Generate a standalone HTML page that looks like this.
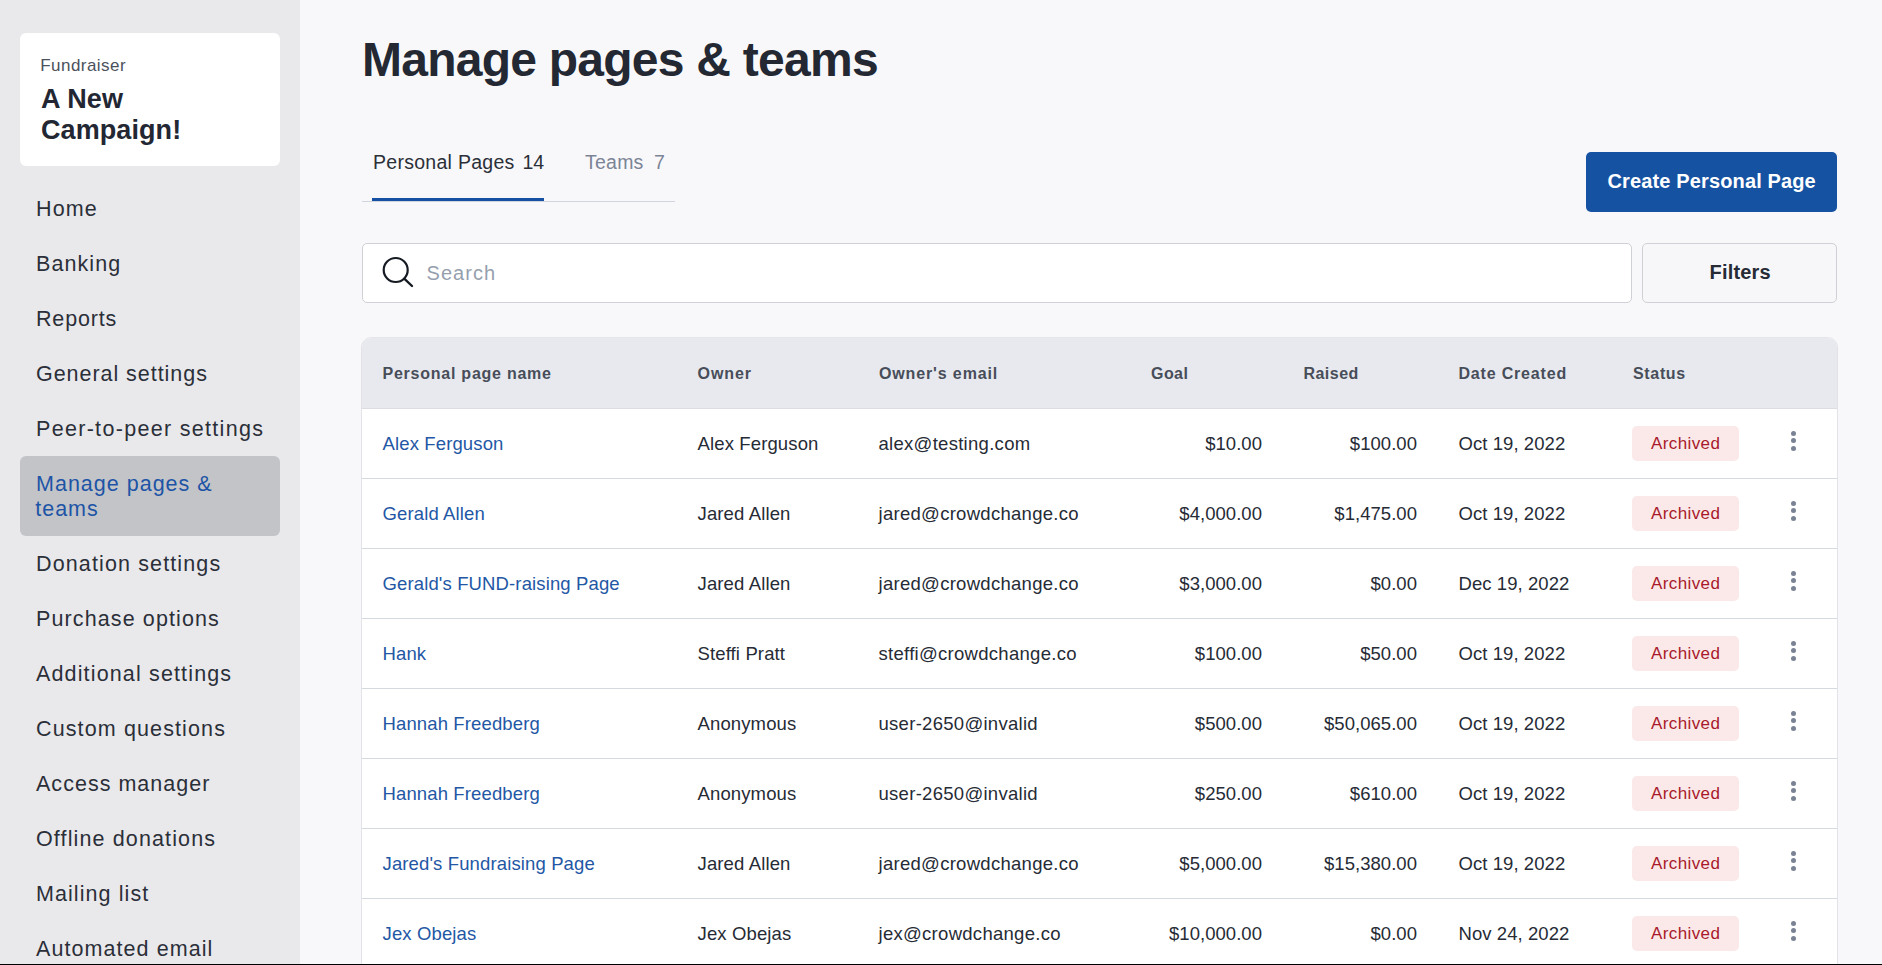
<!DOCTYPE html>
<html><head><meta charset="utf-8"><title>Manage pages &amp; teams</title>
<style>
html,body{margin:0;padding:0}
body{width:1882px;height:965px;overflow:hidden;position:relative;background:#f8f8fa;font-family:"Liberation Sans", sans-serif}
.t{position:absolute;white-space:nowrap}
</style></head><body>
<div style="position:absolute;left:0;top:0;width:300px;height:965px;background:#e9e9ec"></div>
<div style="position:absolute;left:20px;top:33px;width:260px;height:133px;background:#fff;border-radius:6px"></div>
<div id="fund" class="t" style="left:40.2px;top:54.61px;font-size:17px;line-height:21px;color:#4b515c;font-weight:400;letter-spacing:0.465px">Fundraiser</div>
<div id="anew" class="t" style="left:41px;top:81.64px;font-size:27px;line-height:34px;color:#222733;font-weight:700;letter-spacing:0.1px">A New</div>
<div id="camp" class="t" style="left:41px;top:112.64px;font-size:27px;line-height:34px;color:#222733;font-weight:700;letter-spacing:0.083px">Campaign!</div>
<div id="nav0" class="t" style="left:36px;top:195.85px;font-size:21.5px;line-height:27px;color:#2b2f38;font-weight:400;letter-spacing:1.1px">Home</div>
<div id="nav1" class="t" style="left:36px;top:250.85px;font-size:21.5px;line-height:27px;color:#2b2f38;font-weight:400;letter-spacing:1.07px">Banking</div>
<div id="nav2" class="t" style="left:36px;top:305.85px;font-size:21.5px;line-height:27px;color:#2b2f38;font-weight:400;letter-spacing:0.836px">Reports</div>
<div id="nav3" class="t" style="left:36px;top:360.85px;font-size:21.5px;line-height:27px;color:#2b2f38;font-weight:400;letter-spacing:0.956px">General settings</div>
<div id="nav4" class="t" style="left:36px;top:415.85px;font-size:21.5px;line-height:27px;color:#2b2f38;font-weight:400;letter-spacing:1.31px">Peer-to-peer settings</div>
<div style="position:absolute;left:20px;top:456px;width:260px;height:80px;background:#c3c4c8;border-radius:6px"></div>
<div id="nav5" class="t" style="left:36px;top:470.85px;font-size:21.5px;line-height:27px;color:#1d54a6;font-weight:400;letter-spacing:1.006px">Manage pages &amp;</div>
<div id="nav5b" class="t" style="left:35.2px;top:495.75px;font-size:21.5px;line-height:27px;color:#1d54a6;font-weight:400;letter-spacing:1.006px">teams</div>
<div id="nav6" class="t" style="left:36px;top:550.85px;font-size:21.5px;line-height:27px;color:#2b2f38;font-weight:400;letter-spacing:1.128px">Donation settings</div>
<div id="nav7" class="t" style="left:36px;top:605.85px;font-size:21.5px;line-height:27px;color:#2b2f38;font-weight:400;letter-spacing:1.115px">Purchase options</div>
<div id="nav8" class="t" style="left:36px;top:660.85px;font-size:21.5px;line-height:27px;color:#2b2f38;font-weight:400;letter-spacing:1.144px">Additional settings</div>
<div id="nav9" class="t" style="left:36px;top:715.85px;font-size:21.5px;line-height:27px;color:#2b2f38;font-weight:400;letter-spacing:1.122px">Custom questions</div>
<div id="nav10" class="t" style="left:36px;top:770.85px;font-size:21.5px;line-height:27px;color:#2b2f38;font-weight:400;letter-spacing:1.023px">Access manager</div>
<div id="nav11" class="t" style="left:36px;top:825.85px;font-size:21.5px;line-height:27px;color:#2b2f38;font-weight:400;letter-spacing:1.128px">Offline donations</div>
<div id="nav12" class="t" style="left:36px;top:880.85px;font-size:21.5px;line-height:27px;color:#2b2f38;font-weight:400;letter-spacing:1.077px">Mailing list</div>
<div id="nav13" class="t" style="left:36px;top:935.85px;font-size:21.5px;line-height:27px;color:#2b2f38;font-weight:400;letter-spacing:1.07px">Automated email</div>
<div id="title" class="t" style="left:362px;top:29.57px;font-size:48px;line-height:60px;color:#232833;font-weight:700;letter-spacing:-0.752px">Manage pages &amp; teams</div>
<div id="tab1" class="t" style="left:373px;top:150.44px;font-size:19.5px;line-height:24px;color:#2b2f38;font-weight:400;letter-spacing:0.281px">Personal Pages</div>
<div id="tab1n" class="t" style="left:522.5px;top:150.44px;font-size:19.5px;line-height:24px;color:#2b2f38;font-weight:400;letter-spacing:0px">14</div>
<div id="tab2" class="t" style="left:585px;top:150.44px;font-size:19.5px;line-height:24px;color:#7b8496;font-weight:400;letter-spacing:0.229px">Teams</div>
<div id="tab2n" class="t" style="left:654px;top:150.44px;font-size:19.5px;line-height:24px;color:#7b8496;font-weight:400;letter-spacing:0px">7</div>
<div style="position:absolute;left:362px;top:201px;width:313px;height:1px;background:#d1d6de"></div>
<div style="position:absolute;left:372px;top:198px;width:172px;height:3px;background:#1650a3"></div>
<div style="position:absolute;left:1586px;top:152px;width:251px;height:60px;background:#1652a2;border-radius:5px"></div>
<div id="btn" class="t" style="left:1607.5px;top:168.77px;font-size:20px;line-height:25px;color:#ffffff;font-weight:700;letter-spacing:0.136px">Create Personal Page</div>
<div style="position:absolute;left:362px;top:243px;width:1268px;height:58px;background:#fff;border:1px solid #cfd1d6;border-radius:5px"></div>
<svg style="position:absolute;left:380px;top:254px" width="36" height="36" viewBox="0 0 36 36"><circle cx="15.7" cy="16" r="12" fill="none" stroke="#161a22" stroke-width="2.2"/><line x1="24.5" y1="24.8" x2="32" y2="32" stroke="#161a22" stroke-width="2.4" stroke-linecap="round"/></svg>
<div id="search" class="t" style="left:426.5px;top:260.57px;font-size:20px;line-height:25px;color:#969fae;font-weight:400;letter-spacing:1.06px">Search</div>
<div style="position:absolute;left:1642px;top:243px;width:193px;height:58px;background:#f7f7f9;border:1px solid #cfd1d6;border-radius:5px"></div>
<div id="filters" class="t" style="left:1709.5px;top:259.57px;font-size:20px;line-height:25px;color:#262b35;font-weight:700;letter-spacing:0.197px">Filters</div>
<div style="position:absolute;left:361px;top:337px;width:1475px;height:640px;background:#fff;border:1px solid #e2e3e8;border-top-color:#e5e6eb;border-radius:11px 11px 0 0;overflow:hidden"><div style="position:absolute;left:0;top:0;right:0;height:70px;background:#e8e9ee;border-bottom:1px solid #dcdde1"></div></div>
<div id="h0" class="t" style="left:382.5px;top:364.06px;font-size:16px;line-height:20px;color:#474d59;font-weight:700;letter-spacing:0.758px">Personal page name</div>
<div id="h1" class="t" style="left:697.5px;top:364.06px;font-size:16px;line-height:20px;color:#474d59;font-weight:700;letter-spacing:0.95px">Owner</div>
<div id="h2" class="t" style="left:879px;top:364.06px;font-size:16px;line-height:20px;color:#474d59;font-weight:700;letter-spacing:0.867px">Owner's email</div>
<div id="h3" class="t" style="left:1151px;top:364.06px;font-size:16px;line-height:20px;color:#474d59;font-weight:700;letter-spacing:0.436px">Goal</div>
<div id="h4" class="t" style="left:1303.5px;top:364.06px;font-size:16px;line-height:20px;color:#474d59;font-weight:700;letter-spacing:0.46px">Raised</div>
<div id="h5" class="t" style="left:1458.5px;top:364.06px;font-size:16px;line-height:20px;color:#474d59;font-weight:700;letter-spacing:0.814px">Date Created</div>
<div id="h6" class="t" style="left:1633px;top:364.06px;font-size:16px;line-height:20px;color:#474d59;font-weight:700;letter-spacing:0.66px">Status</div>
<div id="r0c0" class="t" style="left:382.5px;top:432.09px;font-size:18.5px;line-height:23px;color:#2357a5;font-weight:400;letter-spacing:0.132px">Alex Ferguson</div>
<div id="r0c1" class="t" style="left:697.5px;top:432.09px;font-size:18.5px;line-height:23px;color:#262b35;font-weight:400;letter-spacing:0.132px">Alex Ferguson</div>
<div id="r0c2" class="t" style="left:878.5px;top:432.09px;font-size:18.5px;line-height:23px;color:#262b35;font-weight:400;letter-spacing:0.287px">alex@testing.com</div>
<div id="r0c3" class="t" style="right:620px;text-align:right;top:432.09px;font-size:18.5px;line-height:23px;color:#262b35;font-weight:400;letter-spacing:0.043px">$10.00</div>
<div id="r0c4" class="t" style="right:465px;text-align:right;top:432.09px;font-size:18.5px;line-height:23px;color:#262b35;font-weight:400;letter-spacing:0.043px">$100.00</div>
<div id="r0c5" class="t" style="left:1458.5px;top:432.09px;font-size:18.5px;line-height:23px;color:#262b35;font-weight:400;letter-spacing:0.071px">Oct 19, 2022</div>
<div style="position:absolute;left:1632px;top:426px;width:107px;height:35px;background:#fbe9e9;border-radius:5px"></div>
<div id="r0b" class="t" style="left:1651px;top:432.81px;font-size:17px;line-height:21px;color:#a8192b;font-weight:400;letter-spacing:0.389px">Archived</div>
<div style="position:absolute;left:1791px;top:430.8px;width:5.2px;height:5.2px;border-radius:50%;background:#7a8295"></div>
<div style="position:absolute;left:1791px;top:438.3px;width:5.2px;height:5.2px;border-radius:50%;background:#7a8295"></div>
<div style="position:absolute;left:1791px;top:445.8px;width:5.2px;height:5.2px;border-radius:50%;background:#7a8295"></div>
<div style="position:absolute;left:362px;top:478px;width:1475px;height:1px;background:#d5d9e0"></div>
<div id="r1c0" class="t" style="left:382.5px;top:502.09px;font-size:18.5px;line-height:23px;color:#2357a5;font-weight:400;letter-spacing:0.132px">Gerald Allen</div>
<div id="r1c1" class="t" style="left:697.5px;top:502.09px;font-size:18.5px;line-height:23px;color:#262b35;font-weight:400;letter-spacing:0.132px">Jared Allen</div>
<div id="r1c2" class="t" style="left:878.5px;top:502.09px;font-size:18.5px;line-height:23px;color:#262b35;font-weight:400;letter-spacing:0.287px">jared@crowdchange.co</div>
<div id="r1c3" class="t" style="right:620px;text-align:right;top:502.09px;font-size:18.5px;line-height:23px;color:#262b35;font-weight:400;letter-spacing:0.043px">$4,000.00</div>
<div id="r1c4" class="t" style="right:465px;text-align:right;top:502.09px;font-size:18.5px;line-height:23px;color:#262b35;font-weight:400;letter-spacing:0.043px">$1,475.00</div>
<div id="r1c5" class="t" style="left:1458.5px;top:502.09px;font-size:18.5px;line-height:23px;color:#262b35;font-weight:400;letter-spacing:0.071px">Oct 19, 2022</div>
<div style="position:absolute;left:1632px;top:496px;width:107px;height:35px;background:#fbe9e9;border-radius:5px"></div>
<div id="r1b" class="t" style="left:1651px;top:502.81px;font-size:17px;line-height:21px;color:#a8192b;font-weight:400;letter-spacing:0.389px">Archived</div>
<div style="position:absolute;left:1791px;top:500.8px;width:5.2px;height:5.2px;border-radius:50%;background:#7a8295"></div>
<div style="position:absolute;left:1791px;top:508.3px;width:5.2px;height:5.2px;border-radius:50%;background:#7a8295"></div>
<div style="position:absolute;left:1791px;top:515.8px;width:5.2px;height:5.2px;border-radius:50%;background:#7a8295"></div>
<div style="position:absolute;left:362px;top:548px;width:1475px;height:1px;background:#d5d9e0"></div>
<div id="r2c0" class="t" style="left:382.5px;top:572.09px;font-size:18.5px;line-height:23px;color:#2357a5;font-weight:400;letter-spacing:0.132px">Gerald's FUND-raising Page</div>
<div id="r2c1" class="t" style="left:697.5px;top:572.09px;font-size:18.5px;line-height:23px;color:#262b35;font-weight:400;letter-spacing:0.132px">Jared Allen</div>
<div id="r2c2" class="t" style="left:878.5px;top:572.09px;font-size:18.5px;line-height:23px;color:#262b35;font-weight:400;letter-spacing:0.287px">jared@crowdchange.co</div>
<div id="r2c3" class="t" style="right:620px;text-align:right;top:572.09px;font-size:18.5px;line-height:23px;color:#262b35;font-weight:400;letter-spacing:0.043px">$3,000.00</div>
<div id="r2c4" class="t" style="right:465px;text-align:right;top:572.09px;font-size:18.5px;line-height:23px;color:#262b35;font-weight:400;letter-spacing:0.043px">$0.00</div>
<div id="r2c5" class="t" style="left:1458.5px;top:572.09px;font-size:18.5px;line-height:23px;color:#262b35;font-weight:400;letter-spacing:0.071px">Dec 19, 2022</div>
<div style="position:absolute;left:1632px;top:566px;width:107px;height:35px;background:#fbe9e9;border-radius:5px"></div>
<div id="r2b" class="t" style="left:1651px;top:572.81px;font-size:17px;line-height:21px;color:#a8192b;font-weight:400;letter-spacing:0.389px">Archived</div>
<div style="position:absolute;left:1791px;top:570.8px;width:5.2px;height:5.2px;border-radius:50%;background:#7a8295"></div>
<div style="position:absolute;left:1791px;top:578.3px;width:5.2px;height:5.2px;border-radius:50%;background:#7a8295"></div>
<div style="position:absolute;left:1791px;top:585.8px;width:5.2px;height:5.2px;border-radius:50%;background:#7a8295"></div>
<div style="position:absolute;left:362px;top:618px;width:1475px;height:1px;background:#d5d9e0"></div>
<div id="r3c0" class="t" style="left:382.5px;top:642.09px;font-size:18.5px;line-height:23px;color:#2357a5;font-weight:400;letter-spacing:0.132px">Hank</div>
<div id="r3c1" class="t" style="left:697.5px;top:642.09px;font-size:18.5px;line-height:23px;color:#262b35;font-weight:400;letter-spacing:0.132px">Steffi Pratt</div>
<div id="r3c2" class="t" style="left:878.5px;top:642.09px;font-size:18.5px;line-height:23px;color:#262b35;font-weight:400;letter-spacing:0.287px">steffi@crowdchange.co</div>
<div id="r3c3" class="t" style="right:620px;text-align:right;top:642.09px;font-size:18.5px;line-height:23px;color:#262b35;font-weight:400;letter-spacing:0.043px">$100.00</div>
<div id="r3c4" class="t" style="right:465px;text-align:right;top:642.09px;font-size:18.5px;line-height:23px;color:#262b35;font-weight:400;letter-spacing:0.043px">$50.00</div>
<div id="r3c5" class="t" style="left:1458.5px;top:642.09px;font-size:18.5px;line-height:23px;color:#262b35;font-weight:400;letter-spacing:0.071px">Oct 19, 2022</div>
<div style="position:absolute;left:1632px;top:636px;width:107px;height:35px;background:#fbe9e9;border-radius:5px"></div>
<div id="r3b" class="t" style="left:1651px;top:642.81px;font-size:17px;line-height:21px;color:#a8192b;font-weight:400;letter-spacing:0.389px">Archived</div>
<div style="position:absolute;left:1791px;top:640.8px;width:5.2px;height:5.2px;border-radius:50%;background:#7a8295"></div>
<div style="position:absolute;left:1791px;top:648.3px;width:5.2px;height:5.2px;border-radius:50%;background:#7a8295"></div>
<div style="position:absolute;left:1791px;top:655.8px;width:5.2px;height:5.2px;border-radius:50%;background:#7a8295"></div>
<div style="position:absolute;left:362px;top:688px;width:1475px;height:1px;background:#d5d9e0"></div>
<div id="r4c0" class="t" style="left:382.5px;top:712.09px;font-size:18.5px;line-height:23px;color:#2357a5;font-weight:400;letter-spacing:0.132px">Hannah Freedberg</div>
<div id="r4c1" class="t" style="left:697.5px;top:712.09px;font-size:18.5px;line-height:23px;color:#262b35;font-weight:400;letter-spacing:0.132px">Anonymous</div>
<div id="r4c2" class="t" style="left:878.5px;top:712.09px;font-size:18.5px;line-height:23px;color:#262b35;font-weight:400;letter-spacing:0.287px">user-2650@invalid</div>
<div id="r4c3" class="t" style="right:620px;text-align:right;top:712.09px;font-size:18.5px;line-height:23px;color:#262b35;font-weight:400;letter-spacing:0.043px">$500.00</div>
<div id="r4c4" class="t" style="right:465px;text-align:right;top:712.09px;font-size:18.5px;line-height:23px;color:#262b35;font-weight:400;letter-spacing:0.043px">$50,065.00</div>
<div id="r4c5" class="t" style="left:1458.5px;top:712.09px;font-size:18.5px;line-height:23px;color:#262b35;font-weight:400;letter-spacing:0.071px">Oct 19, 2022</div>
<div style="position:absolute;left:1632px;top:706px;width:107px;height:35px;background:#fbe9e9;border-radius:5px"></div>
<div id="r4b" class="t" style="left:1651px;top:712.81px;font-size:17px;line-height:21px;color:#a8192b;font-weight:400;letter-spacing:0.389px">Archived</div>
<div style="position:absolute;left:1791px;top:710.8px;width:5.2px;height:5.2px;border-radius:50%;background:#7a8295"></div>
<div style="position:absolute;left:1791px;top:718.3px;width:5.2px;height:5.2px;border-radius:50%;background:#7a8295"></div>
<div style="position:absolute;left:1791px;top:725.8px;width:5.2px;height:5.2px;border-radius:50%;background:#7a8295"></div>
<div style="position:absolute;left:362px;top:758px;width:1475px;height:1px;background:#d5d9e0"></div>
<div id="r5c0" class="t" style="left:382.5px;top:782.09px;font-size:18.5px;line-height:23px;color:#2357a5;font-weight:400;letter-spacing:0.132px">Hannah Freedberg</div>
<div id="r5c1" class="t" style="left:697.5px;top:782.09px;font-size:18.5px;line-height:23px;color:#262b35;font-weight:400;letter-spacing:0.132px">Anonymous</div>
<div id="r5c2" class="t" style="left:878.5px;top:782.09px;font-size:18.5px;line-height:23px;color:#262b35;font-weight:400;letter-spacing:0.287px">user-2650@invalid</div>
<div id="r5c3" class="t" style="right:620px;text-align:right;top:782.09px;font-size:18.5px;line-height:23px;color:#262b35;font-weight:400;letter-spacing:0.043px">$250.00</div>
<div id="r5c4" class="t" style="right:465px;text-align:right;top:782.09px;font-size:18.5px;line-height:23px;color:#262b35;font-weight:400;letter-spacing:0.043px">$610.00</div>
<div id="r5c5" class="t" style="left:1458.5px;top:782.09px;font-size:18.5px;line-height:23px;color:#262b35;font-weight:400;letter-spacing:0.071px">Oct 19, 2022</div>
<div style="position:absolute;left:1632px;top:776px;width:107px;height:35px;background:#fbe9e9;border-radius:5px"></div>
<div id="r5b" class="t" style="left:1651px;top:782.81px;font-size:17px;line-height:21px;color:#a8192b;font-weight:400;letter-spacing:0.389px">Archived</div>
<div style="position:absolute;left:1791px;top:780.8px;width:5.2px;height:5.2px;border-radius:50%;background:#7a8295"></div>
<div style="position:absolute;left:1791px;top:788.3px;width:5.2px;height:5.2px;border-radius:50%;background:#7a8295"></div>
<div style="position:absolute;left:1791px;top:795.8px;width:5.2px;height:5.2px;border-radius:50%;background:#7a8295"></div>
<div style="position:absolute;left:362px;top:828px;width:1475px;height:1px;background:#d5d9e0"></div>
<div id="r6c0" class="t" style="left:382.5px;top:852.09px;font-size:18.5px;line-height:23px;color:#2357a5;font-weight:400;letter-spacing:0.132px">Jared's Fundraising Page</div>
<div id="r6c1" class="t" style="left:697.5px;top:852.09px;font-size:18.5px;line-height:23px;color:#262b35;font-weight:400;letter-spacing:0.132px">Jared Allen</div>
<div id="r6c2" class="t" style="left:878.5px;top:852.09px;font-size:18.5px;line-height:23px;color:#262b35;font-weight:400;letter-spacing:0.287px">jared@crowdchange.co</div>
<div id="r6c3" class="t" style="right:620px;text-align:right;top:852.09px;font-size:18.5px;line-height:23px;color:#262b35;font-weight:400;letter-spacing:0.043px">$5,000.00</div>
<div id="r6c4" class="t" style="right:465px;text-align:right;top:852.09px;font-size:18.5px;line-height:23px;color:#262b35;font-weight:400;letter-spacing:0.043px">$15,380.00</div>
<div id="r6c5" class="t" style="left:1458.5px;top:852.09px;font-size:18.5px;line-height:23px;color:#262b35;font-weight:400;letter-spacing:0.071px">Oct 19, 2022</div>
<div style="position:absolute;left:1632px;top:846px;width:107px;height:35px;background:#fbe9e9;border-radius:5px"></div>
<div id="r6b" class="t" style="left:1651px;top:852.81px;font-size:17px;line-height:21px;color:#a8192b;font-weight:400;letter-spacing:0.389px">Archived</div>
<div style="position:absolute;left:1791px;top:850.8px;width:5.2px;height:5.2px;border-radius:50%;background:#7a8295"></div>
<div style="position:absolute;left:1791px;top:858.3px;width:5.2px;height:5.2px;border-radius:50%;background:#7a8295"></div>
<div style="position:absolute;left:1791px;top:865.8px;width:5.2px;height:5.2px;border-radius:50%;background:#7a8295"></div>
<div style="position:absolute;left:362px;top:898px;width:1475px;height:1px;background:#d5d9e0"></div>
<div id="r7c0" class="t" style="left:382.5px;top:922.09px;font-size:18.5px;line-height:23px;color:#2357a5;font-weight:400;letter-spacing:0.132px">Jex Obejas</div>
<div id="r7c1" class="t" style="left:697.5px;top:922.09px;font-size:18.5px;line-height:23px;color:#262b35;font-weight:400;letter-spacing:0.132px">Jex Obejas</div>
<div id="r7c2" class="t" style="left:878.5px;top:922.09px;font-size:18.5px;line-height:23px;color:#262b35;font-weight:400;letter-spacing:0.287px">jex@crowdchange.co</div>
<div id="r7c3" class="t" style="right:620px;text-align:right;top:922.09px;font-size:18.5px;line-height:23px;color:#262b35;font-weight:400;letter-spacing:0.043px">$10,000.00</div>
<div id="r7c4" class="t" style="right:465px;text-align:right;top:922.09px;font-size:18.5px;line-height:23px;color:#262b35;font-weight:400;letter-spacing:0.043px">$0.00</div>
<div id="r7c5" class="t" style="left:1458.5px;top:922.09px;font-size:18.5px;line-height:23px;color:#262b35;font-weight:400;letter-spacing:0.071px">Nov 24, 2022</div>
<div style="position:absolute;left:1632px;top:916px;width:107px;height:35px;background:#fbe9e9;border-radius:5px"></div>
<div id="r7b" class="t" style="left:1651px;top:922.81px;font-size:17px;line-height:21px;color:#a8192b;font-weight:400;letter-spacing:0.389px">Archived</div>
<div style="position:absolute;left:1791px;top:920.8px;width:5.2px;height:5.2px;border-radius:50%;background:#7a8295"></div>
<div style="position:absolute;left:1791px;top:928.3px;width:5.2px;height:5.2px;border-radius:50%;background:#7a8295"></div>
<div style="position:absolute;left:1791px;top:935.8px;width:5.2px;height:5.2px;border-radius:50%;background:#7a8295"></div>
<div style="position:absolute;left:0;top:964px;width:1882px;height:1px;background:#000"></div>
</body></html>
